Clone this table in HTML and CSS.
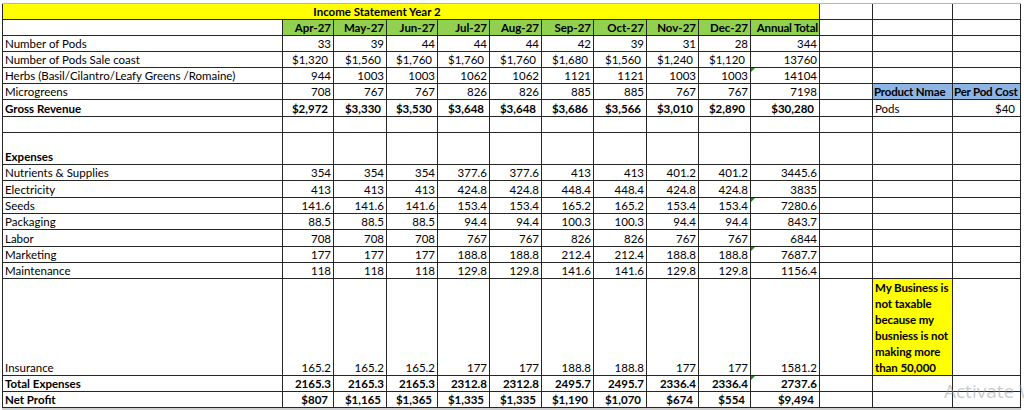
FILE: index.html
```html
<!DOCTYPE html>
<html lang="en">
<head>
<meta charset="utf-8">
<title>Income Statement Year 2</title>
<link rel="stylesheet" href="styles.css">
</head>
<body>
<div class="sheet">
  <!-- title row -->
  <div class="c y title b">Income Statement Year 2</div>
  <div class="c"></div><div class="c"></div><div class="c"></div>

  <!-- header row -->
  <div class="c"></div>
  <div class="c g n b">Apr-27</div><div class="c g n b">May-27</div><div class="c g n b">Jun-27</div>
  <div class="c g n b">Jul-27</div><div class="c g n b">Aug-27</div><div class="c g n b">Sep-27</div>
  <div class="c g n b">Oct-27</div><div class="c g n b">Nov-27</div><div class="c g n b">Dec-27</div>
  <div class="c g n b tight">Annual Total</div>
  <div class="c"></div><div class="c"></div><div class="c"></div>

  <div class="c l">Number of Pods</div>
  <div class="c n">33</div><div class="c n">39</div><div class="c n">44</div><div class="c n">44</div><div class="c n">44</div><div class="c n">42</div><div class="c n">39</div><div class="c n">31</div><div class="c n">28</div>
  <div class="c n">344</div>
  <div class="c"></div><div class="c"></div><div class="c"></div>

  <div class="c l">Number of Pods Sale coast</div>
  <div class="c n cur">$1,320</div><div class="c n cur">$1,560</div><div class="c n cur">$1,760</div><div class="c n cur">$1,760</div><div class="c n cur">$1,760</div><div class="c n cur">$1,680</div><div class="c n cur">$1,560</div><div class="c n cur">$1,240</div><div class="c n cur">$1,120</div>
  <div class="c n">13760</div>
  <div class="c"></div><div class="c"></div><div class="c"></div>

  <div class="c l">Herbs (Basil/Cilantro/Leafy Greens /Romaine)</div>
  <div class="c n">944</div><div class="c n">1003</div><div class="c n">1003</div><div class="c n">1062</div><div class="c n">1062</div><div class="c n">1121</div><div class="c n">1121</div><div class="c n">1003</div><div class="c n">1003</div>
  <div class="c n tri">14104</div>
  <div class="c"></div><div class="c"></div><div class="c"></div>

  <div class="c l">Microgreens</div>
  <div class="c n">708</div><div class="c n">767</div><div class="c n">767</div><div class="c n">826</div><div class="c n">826</div><div class="c n">885</div><div class="c n">885</div><div class="c n">767</div><div class="c n">767</div>
  <div class="c n">7198</div>
  <div class="c"></div>
  <div class="c bl l b tight">Product Nmae</div><div class="c bl l b tight">Per Pod Cost</div>

  <div class="c l b">Gross Revenue</div>
  <div class="c n cur b">$2,972</div><div class="c n cur b">$3,330</div><div class="c n cur b">$3,530</div><div class="c n cur b">$3,648</div><div class="c n cur b">$3,648</div><div class="c n cur b">$3,686</div><div class="c n cur b">$3,566</div><div class="c n cur b">$3,010</div><div class="c n cur b">$2,890</div>
  <div class="c n cur b">$30,280</div>
  <div class="c"></div>
  <div class="c l">Pods</div><div class="c n cur">$40</div>

  <!-- empty row -->
  <div class="c"></div><div class="c"></div><div class="c"></div><div class="c"></div><div class="c"></div><div class="c"></div><div class="c"></div>
  <div class="c"></div><div class="c"></div><div class="c"></div><div class="c"></div><div class="c"></div><div class="c"></div><div class="c"></div>

  <div class="c l b">Expenses</div>
  <div class="c"></div><div class="c"></div><div class="c"></div><div class="c"></div><div class="c"></div><div class="c"></div>
  <div class="c"></div><div class="c"></div><div class="c"></div><div class="c"></div><div class="c"></div><div class="c"></div><div class="c"></div>

  <div class="c l">Nutrients &amp; Supplies</div>
  <div class="c n">354</div><div class="c n">354</div><div class="c n">354</div><div class="c n">377.6</div><div class="c n">377.6</div><div class="c n">413</div><div class="c n">413</div><div class="c n">401.2</div><div class="c n">401.2</div>
  <div class="c n">3445.6</div>
  <div class="c"></div><div class="c"></div><div class="c"></div>

  <div class="c l">Electricity</div>
  <div class="c n">413</div><div class="c n">413</div><div class="c n">413</div><div class="c n">424.8</div><div class="c n">424.8</div><div class="c n">448.4</div><div class="c n">448.4</div><div class="c n">424.8</div><div class="c n">424.8</div>
  <div class="c n">3835</div>
  <div class="c"></div><div class="c"></div><div class="c"></div>

  <div class="c l">Seeds</div>
  <div class="c n">141.6</div><div class="c n">141.6</div><div class="c n">141.6</div><div class="c n">153.4</div><div class="c n">153.4</div><div class="c n">165.2</div><div class="c n">165.2</div><div class="c n">153.4</div><div class="c n">153.4</div>
  <div class="c n tri">7280.6</div>
  <div class="c"></div><div class="c"></div><div class="c"></div>

  <div class="c l">Packaging</div>
  <div class="c n">88.5</div><div class="c n">88.5</div><div class="c n">88.5</div><div class="c n">94.4</div><div class="c n">94.4</div><div class="c n">100.3</div><div class="c n">100.3</div><div class="c n">94.4</div><div class="c n">94.4</div>
  <div class="c n">843.7</div>
  <div class="c"></div><div class="c"></div><div class="c"></div>

  <div class="c l">Labor</div>
  <div class="c n">708</div><div class="c n">708</div><div class="c n">708</div><div class="c n">767</div><div class="c n">767</div><div class="c n">826</div><div class="c n">826</div><div class="c n">767</div><div class="c n">767</div>
  <div class="c n">6844</div>
  <div class="c"></div><div class="c"></div><div class="c"></div>

  <div class="c l">Marketing</div>
  <div class="c n">177</div><div class="c n">177</div><div class="c n">177</div><div class="c n">188.8</div><div class="c n">188.8</div><div class="c n">212.4</div><div class="c n">212.4</div><div class="c n">188.8</div><div class="c n">188.8</div>
  <div class="c n tri">7687.7</div>
  <div class="c"></div><div class="c"></div><div class="c"></div>

  <div class="c l">Maintenance</div>
  <div class="c n">118</div><div class="c n">118</div><div class="c n">118</div><div class="c n">129.8</div><div class="c n">129.8</div><div class="c n">141.6</div><div class="c n">141.6</div><div class="c n">129.8</div><div class="c n">129.8</div>
  <div class="c n">1156.4</div>
  <div class="c"></div><div class="c"></div><div class="c"></div>

  <div class="c l">Insurance</div>
  <div class="c n">165.2</div><div class="c n">165.2</div><div class="c n">165.2</div><div class="c n">177</div><div class="c n">177</div><div class="c n">188.8</div><div class="c n">188.8</div><div class="c n">177</div><div class="c n">177</div>
  <div class="c n">1581.2</div>
  <div class="c"></div>
  <div class="c y note b">My Business is not taxable because my busniess is not making more than 50,000</div>
  <div class="c"></div>

  <div class="c l b">Total Expenses</div>
  <div class="c n b">2165.3</div><div class="c n b">2165.3</div><div class="c n b">2165.3</div><div class="c n b">2312.8</div><div class="c n b">2312.8</div><div class="c n b">2495.7</div><div class="c n b">2495.7</div><div class="c n b">2336.4</div><div class="c n b">2336.4</div>
  <div class="c n b tri">2737.6</div>
  <div class="c"></div><div class="c"></div><div class="c"></div>

  <div class="c l b">Net Profit</div>
  <div class="c n cur b">$807</div><div class="c n cur b">$1,165</div><div class="c n cur b">$1,365</div><div class="c n cur b">$1,335</div><div class="c n cur b">$1,335</div><div class="c n cur b">$1,190</div><div class="c n cur b">$1,070</div><div class="c n cur b">$674</div><div class="c n cur b">$554</div>
  <div class="c n cur b">$9,494</div>
  <div class="c"></div><div class="c"></div><div class="c"></div>
</div>
<div class="watermark"><span class="wm-text">Activate Windows</span></div>
</body>
</html>
```

FILE: styles.css
```css
html, body {
  margin: 0;
  padding: 0;
  background: #ffffff;
  overflow: hidden;
  width: 1024px;
  height: 410px;
}

body {
  font-family: Lato, "Liberation Sans", sans-serif;
  font-size: 11.5px;
  color: #000;
  position: relative;
}

.sheet {
  display: grid;
  grid-template-columns: 279px 50px 52px 50px 51px 51px 51px 52px 51px 51px 68px 52px 79px 67px;
  grid-template-rows: 15px 15px 15px 15px 15px 15px 16px 15px 31px 15px 16px 15px 15px 16px 15px 15px 96px 15px 15px;
  gap: 1px;
  background: #262626;
  padding: 0 1px 1px 1px;
  border-top: 1px solid #b4b4b4;
  margin: 3px 0 0 2px;
  width: max-content;
  border-bottom: 2px solid #d0d0d0;
}

.c {
  background: #fff;
  display: flex;
  align-items: flex-end;
  line-height: 13px;
  padding: 0 2px 1px 2px;
  white-space: nowrap;
  overflow: visible;
  position: relative;
  min-width: 0;
}

.l { justify-content: flex-start; }
.n { justify-content: flex-end; }
.cur { padding-right: 5px; }
.b { font-weight: 700; }
.tight { letter-spacing: -0.2px; padding-left: 1px; padding-right: 1px; }

.y { background: #ffff00; }
.g { background: #92d050; }
.bl { background: #8db4e2; }

.title {
  grid-column: 1 / span 11;
  justify-content: center;
  padding-right: 70px;
}

.note {
  white-space: normal;
  align-items: flex-start;
  line-height: 16px;
  padding: 1px 2px 0 2px;
  letter-spacing: -0.1px;
}

.tri::before {
  content: "";
  position: absolute;
  left: 0;
  top: 0;
  width: 0;
  height: 0;
  border-top: 4px solid #1e8a1e;
  border-right: 4px solid transparent;
}

.watermark {
  position: absolute;
  left: 944px;
  top: 378px;
  width: 80px;
  height: 30px;
  overflow: hidden;
  font-family: "Open Sans", "Noto Sans", sans-serif;
  font-size: 19px;
  color: rgba(150, 150, 150, 0.5);
  white-space: nowrap;
}
```
